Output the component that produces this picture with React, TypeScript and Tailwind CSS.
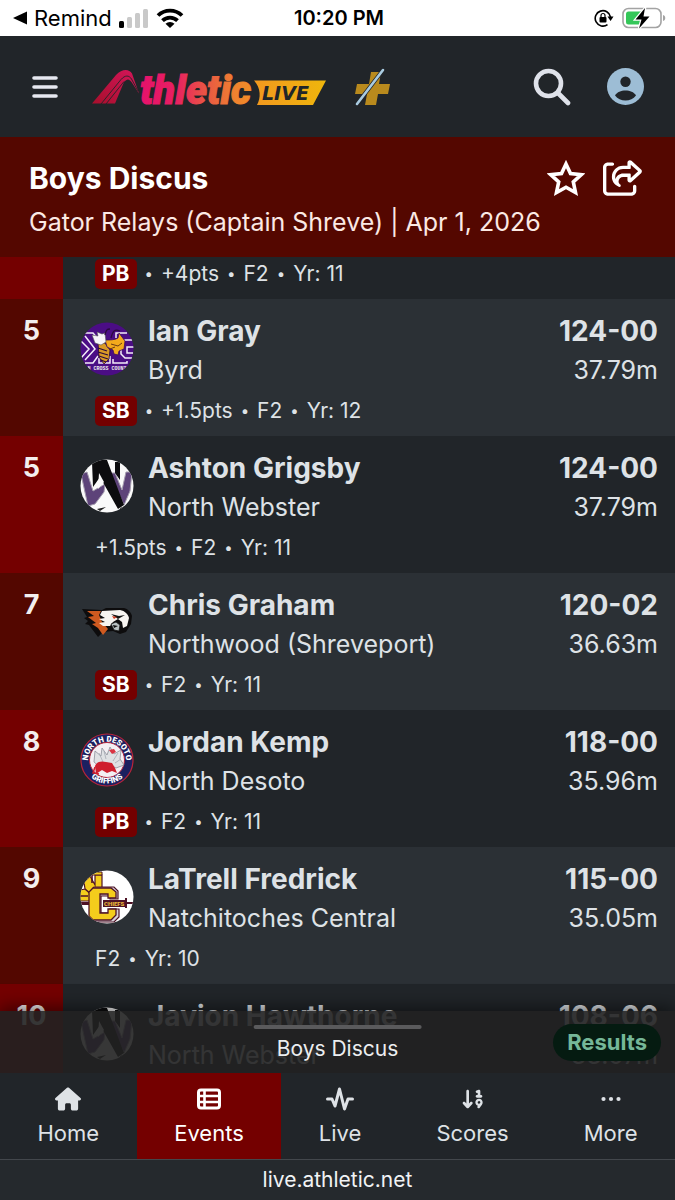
import type { ReactNode } from 'react'
import { FaArrowDown19, FaHouse, FaRegShareFromSquare } from 'react-icons/fa6'

interface Result {
  place: number
  name: string
  school: string
  logo: ReactNode
  mark: string
  metric: string
  badge?: 'PB' | 'SB'
  meta: string[]
}

function ByrdLogo() {
  return (
    <svg viewBox="0 0 54 54" className="size-[54px]" aria-hidden="true">
      <clipPath id="byrd"><circle cx="27" cy="27" r="26.5" /></clipPath>
      <g clipPath="url(#byrd)">
        <rect width="54" height="54" fill="#4b0d85" />
        <g fill="none" stroke="#f2ecf8" strokeWidth="1.5">
          <path d="M4 11h9l5 6M1 19l8 8-8 9M5 41h8l5-7M19 36v5h11v-7M47 11H36v5M53 18h-8l-4 4v10l4 4h9M33 37v4h14v-2M53 31h-6v-6h7" />
          <path d="M5 14l10 13L5 38" />
        </g>
        <path d="M18 20l7 1 5 7-1 9-5 5-5-7z" fill="#d99a26" stroke="#2a0b3c" strokeWidth=".8" />
        <path d="M18 26l9 3M18 30l10 3M19 34l9 3M21 38l5 2" stroke="#2a0b3c" strokeWidth="1.3" />
        <path d="M25 18c5 0 10 0 13-2l1-5 6 8-1 8-5 2-1 4-4-1-1-4-6-3z" fill="#f3aa1c" stroke="#3b0a5f" strokeWidth=".8" />
        <path d="M31 22l7 2 4-3M30 27l5-2" fill="none" stroke="#6b3a12" />
        <path d="M12 13l6 1-1-4 5 2 3-1 1 9-5 3-6-2z" fill="#f7f4fa" stroke="#555" strokeWidth=".6" />
        <path d="M31 16c2-8 4-9 9-7M25 13c1-5 2-6 5-6" fill="none" stroke="#2a0b3c" strokeWidth="1.3" />
        <text x="27" y="48" textAnchor="middle" fontSize="5" fontWeight="700" fill="#eee" fontFamily="Liberation Mono, monospace">N CROSS COUNT</text>
      </g>
    </svg>
  )
}

function WebsterLogo({ id }: { id: string }) {
  return (
    <svg viewBox="0 0 54 54" className="size-[54px]" aria-hidden="true">
      <clipPath id={id}><circle cx="27" cy="27" r="26.5" /></clipPath>
      <g clipPath={`url(#${id})`}>
        <rect width="54" height="54" fill="#fafafa" />
        <path d="M1 15l6-2 6 19 12-7-1 8-9 12-7 2zM29 14h6l7 17 4-18h6l-2 19-6 14z" fill="#5d4379" stroke="#a49cae" />
        <path d="M12 3l8-2h7l17 45-6 4-18-32-7 10zM35 3h5v18l-5-7z" fill="#0c0c0e" />
        <path d="M19 14l5 9-6 7z" fill="#fafafa" />
        <path d="M29 3l4 0 1 10z" fill="#fafafa" />
        <path d="M17 50l9-2-6 4zM40 49l5-2-5 6z" fill="#222" />
      </g>
    </svg>
  )
}

function NorthwoodLogo() {
  return (
    <svg viewBox="0 0 54 54" className="size-[54px]" aria-hidden="true">
      <path d="M2 13l20 1 4-2h18c4 1 7 4 8 8l-1 8-5 8-6 2-7-3-10 1-5 5-9-12-4-1 3-3-4-3 3-1z" fill="#0d0c0d" />
      <path d="M7 15h14l-2 4 3 7 6 7-5 6-5-7-6-4 4-1-8-6 6-1z" fill="#cf5a20" />
      <path d="M22 15l18-1c5 1 8 4 9 8l-2 8-4 2-1-6-4-3-5 3-3 4h-7l-4-3 6-1-6-3 6-1-5-3z" fill="#f7f4f0" />
      <path d="M31 18l8 2 6-1-7 4z" fill="#111" />
      <path d="M32 20l5 1-3 2z" fill="#cf3b20" />
      <path d="M31 28l5-2 4 3-1 6-5-1z" fill="#b9c1c2" stroke="#151515" strokeWidth=".8" />
      <path d="M33 29l5 1-4 2z" fill="#111" />
    </svg>
  )
}

function DesotoLogo() {
  return (
    <svg viewBox="0 0 54 54" className="size-[54px]" aria-hidden="true">
      <circle cx="27" cy="27" r="26" fill="#1c2060" stroke="#b8243a" strokeWidth="1.2" />
      <circle cx="27" cy="27" r="17.500" fill="#f3eff3" stroke="#b8243a" />
      <path id="desoto-top" d="M8.500 32A19 19 0 1 1 45.500 32" fill="none" />
      <path id="desoto-bottom" d="M3 30A24.300 24.300 0 0 0 51 30" fill="none" />
      <g fill="#fff" fontSize="8" fontWeight="900" fontFamily="Roboto, sans-serif" textAnchor="middle">
        <text><textPath href="#desoto-top" startOffset="50%">NORTH DESOTO</textPath></text>
        <text><textPath href="#desoto-bottom" startOffset="50%">GRIFFINS</textPath></text>
      </g>
      <path d="M15 18l6 5 1-8 5 7 3-8 4 7 7-4-1 9 4 6-8 3-9-5-6 5-7-6z" fill="#dfe1e4" stroke="#8b8f9a" strokeWidth=".8" />
      <path d="M19 20l4 9M24 18l2 8M38 20l-5 8M41 26l-6 4" stroke="#a5a9b2" strokeWidth=".8" />
      <path d="M15 33c2-5 7-5 11-4l6 1 3 5 2 5-5-2-5 2-5-3-6 4z" fill="#cf1f2e" />
      <path d="M29 17l5-1 2 3-4 2z" fill="#d93443" />
      <path d="M15 34l-2 6 6 1" fill="none" stroke="#cf1f2e" strokeWidth="1.500" />
    </svg>
  )
}

function ChiefsLogo() {
  return (
    <svg viewBox="0 0 54 54" className="size-[54px]" aria-hidden="true">
      <clipPath id="chiefs"><circle cx="27" cy="27" r="26.5" /></clipPath>
      <g clipPath="url(#chiefs)">
        <rect width="54" height="54" fill="#fff" />
        <path d="M4 12l6-6 5 9V5h7v13l-8 4-4 9H0V20l5-1z" fill="#f4cd1c" stroke="#4e1226" strokeWidth="1.200" />
        <path d="M12 4v9M5 19l7 6M0 26h8" stroke="#4e1226" strokeWidth="1.600" />
        <path d="M12 2h10v3H12z" fill="#f4cd1c" stroke="#4e1226" />
        <path d="M14 17h20l4 4v8h-8v-3h-9v17h9v-4h9v8l-5 5H16l-5-5V21z" fill="#d6d0d8" stroke="#4e1226" strokeWidth="1.200" />
        <path d="M13 18h18l5 4v6h-8v-4h-8v19h8v-4h8v6l-5 5H13l-4-4V22z" fill="#f4cd1c" stroke="#4e1226" strokeWidth="1.300" />
        <path d="M23 30h22v-2l2 0v4h6v2h-6v4h-2v-1H23z" fill="#4e1226" />
        <path d="M0 32h9v3H0z" fill="#4e1226" />
        <text x="24" y="36" fontSize="6" fontWeight="900" fill="#e8b63a" fontFamily="Roboto, sans-serif">CHIEFS</text>
      </g>
    </svg>
  )
}

const results: Result[] = [
  { place: 5, name: 'Ian Gray', school: 'Byrd', logo: <ByrdLogo />, mark: '124-00', metric: '37.79m', badge: 'SB', meta: ['+1.5pts', 'F2', 'Yr: 12'] },
  { place: 5, name: 'Ashton Grigsby', school: 'North Webster', logo: <WebsterLogo id="nw-1" />, mark: '124-00', metric: '37.79m', meta: ['+1.5pts', 'F2', 'Yr: 11'] },
  { place: 7, name: 'Chris Graham', school: 'Northwood (Shreveport)', logo: <NorthwoodLogo />, mark: '120-02', metric: '36.63m', badge: 'SB', meta: ['F2', 'Yr: 11'] },
  { place: 8, name: 'Jordan Kemp', school: 'North Desoto', logo: <DesotoLogo />, mark: '118-00', metric: '35.96m', badge: 'PB', meta: ['F2', 'Yr: 11'] },
  { place: 9, name: 'LaTrell Fredrick', school: 'Natchitoches Central', logo: <ChiefsLogo />, mark: '115-00', metric: '35.05m', meta: ['F2', 'Yr: 10'] },
  { place: 10, name: 'Javion Hawthorne', school: 'North Webster', logo: <WebsterLogo id="nw-2" />, mark: '108-06', metric: '33.07m', meta: ['F2', 'Yr: 11'] },
]

function Meta({ badge, meta }: { badge?: string; meta: string[] }) {
  return (
    <p className="flex h-[30px] items-center gap-2 pl-8 text-[21px]">
      {badge && <span className="rounded-[5px] bg-[#740000] px-[7px] leading-[30px] font-bold text-white">{badge}</span>}
      {meta.map((item, i) => (
        <span key={item} className="flex items-center gap-2">
          {(badge || i > 0) && <span className="text-[15px]">•</span>}
          <span>{item}</span>
        </span>
      ))}
    </p>
  )
}

function ResultRow({ result }: { result: Result }) {
  return (
    <li className="group flex shrink-0 bg-[#212529] odd:bg-[#2b3035]">
      <div className="w-[63px] shrink-0 bg-[#740000] pt-3 text-center text-[27px] leading-10 font-bold text-[#f3eeee] group-odd:bg-[#530700]">
        {result.place}
      </div>
      <div className="min-w-0 flex-1 pt-3 pb-[10px]">
        <div className="flex gap-[14px] px-[17px]">
          <div className="mt-[11px] size-[54px] shrink-0">{result.logo}</div>
          <div className="min-w-0 flex-1">
            <p className="truncate text-[28px] leading-10 font-bold">{result.name}</p>
            <p className="truncate text-[25px] leading-[38px]">{result.school}</p>
          </div>
          <div className="text-right">
            <p className="text-[28px] leading-10 font-bold">{result.mark}</p>
            <p className="text-[25px] leading-[38px]">{result.metric}</p>
          </div>
        </div>
        <div className="mt-[7px]">
          <Meta badge={result.badge} meta={result.meta} />
        </div>
      </div>
    </li>
  )
}

function StatusBar() {
  return (
    <div className="grid h-9 shrink-0 grid-cols-[1fr_auto_1fr] items-center bg-white pr-[9px] pl-3 text-black">
      <div className="flex items-center gap-[7px]">
        <svg viewBox="0 0 15 14" className="h-[14px] w-[15px]" aria-hidden="true"><path d="M1 7L15 .5v13z" /></svg>
        <span className="text-[22px] leading-none">Remind</span>
        <svg viewBox="0 0 30 20" className="h-5 w-[30px]" aria-hidden="true">
          <rect x="0" y="13" width="5" height="7" rx="1.500" />
          <g fill="#c9c9c9">
            <rect x="8" y="9" width="5" height="11" rx="1.500" />
            <rect x="16" y="5" width="5" height="15" rx="1.500" />
            <rect x="24" y="1" width="5" height="19" rx="1.500" />
          </g>
        </svg>
        <svg viewBox="0 0 28 20" className="h-5 w-7" aria-hidden="true">
          <g fill="none" stroke="#000" strokeWidth="3.800">
            <path d="M2 7.500a17 17 0 0 1 24 0" />
            <path d="M6.500 12.600a10.700 10.700 0 0 1 15 0" />
          </g>
          <path d="M14 20l-4.500-4.300a6.500 6.500 0 0 1 9 0z" />
        </svg>
      </div>
      <span className="text-[20px] leading-none font-semibold">10:20 PM</span>
      <div className="flex items-center justify-end gap-2">
        <svg viewBox="0 0 20 18" className="h-[18px] w-5" aria-hidden="true">
          <path d="M13.500 15.600A7.700 7.700 0 1 1 16.500 8" fill="none" stroke="#000" strokeWidth="1.600" />
          <path d="M13.500 7.500h6L16.600 12z" />
          <rect x="5.500" y="8" width="7" height="5.500" rx="1" />
          <path d="M7 8V6.500a2 2 0 0 1 4 0V8" fill="none" stroke="#000" strokeWidth="1.200" />
        </svg>
        <svg viewBox="0 0 44 24" className="h-6 w-11" aria-hidden="true">
          <rect x="1" y="2.500" width="38" height="19" rx="5.500" fill="none" stroke="#a3a3a3" strokeWidth="1.600" />
          <rect x="4" y="5.500" width="17" height="13" rx="2.500" fill="#34c759" />
          <path d="M41 9c3 .5 3 5.500 0 6z" fill="#a3a3a3" />
          <path d="M23 2L13.500 13.500h6L17 22.500 27.500 10.500h-6z" stroke="#fff" strokeWidth="2.500" paintOrder="stroke" />
        </svg>
      </div>
    </div>
  )
}

function BrandLogo() {
  return (
    <svg viewBox="0 0 240 44" className="h-11 w-[240px] overflow-visible" role="img" aria-label="Athletic LIVE">
      <defs>
        <linearGradient id="word" gradientUnits="userSpaceOnUse" x1="50" y1="0" x2="168" y2="0">
          <stop offset="0" stopColor="#e5126b" />
          <stop offset=".3" stopColor="#e81f62" />
          <stop offset=".55" stopColor="#e95445" />
          <stop offset=".8" stopColor="#ef8130" />
          <stop offset="1" stopColor="#f39322" />
        </linearGradient>
        <linearGradient id="peak" x1="0" y1="1" x2="1" y2="0">
          <stop offset="0" stopColor="#a70f2c" />
          <stop offset="1" stopColor="#d5165a" />
        </linearGradient>
        <linearGradient id="tag" x1="0" y1="0" x2="1" y2="0">
          <stop offset="0" stopColor="#f2981f" />
          <stop offset="1" stopColor="#efb60c" />
        </linearGradient>
      </defs>
      <path d="M2 38.500L26 10C32 3.500 39 3.500 42 8.500L49 28.500 41.500 17c-2.500-3.500-4.500-3.500-7.500 0L25 38.500H17L4 38.500z" fill="url(#peak)" />
      <path d="M11 39L31 14.500c4-4.500 8-4.500 10.500-.5L48 26M16 39L34 16.500" fill="none" stroke="#212529" strokeWidth=".9" />
      <path d="M164 15.500h72L223 40h-56c4-7 4-17-3-24.500z" fill="url(#tag)" />
      <text x="50" y="38.500" fontSize="40" fontStyle="italic" fontWeight="900" fill="url(#word)" stroke="url(#word)" fontFamily="Roboto, sans-serif">thletic</text>
      <text x="172" y="35" fontSize="19" fontStyle="italic" fontWeight="700" fill="#212529" fontFamily="DejaVu Sans, sans-serif">LIVE</text>
    </svg>
  )
}

function TopNav() {
  return (
    <header className="flex h-[101px] shrink-0 items-center bg-[#212529] pr-[31px] pl-8">
      <button aria-label="Menu">
        <svg viewBox="0 0 26 24" className="h-6 w-[26px]" stroke="#e6e8f0" strokeWidth="3.600" strokeLinecap="round" aria-hidden="true">
          <path d="M2 3h22M2 12h22M2 21h22" />
        </svg>
      </button>
      <a href="#" className="ml-8"><BrandLogo /></a>
      <button aria-label="Athletic plus" className="ml-6">
        <svg viewBox="0 0 37 38" className="h-[38px] w-[37px]" aria-hidden="true">
          <path d="M17 4h10l-2 12h11l-2 10H24l-2 11H11l2-11H1l2-10h12z" fill="#b98a1d" />
          <path d="M3 36L29 2" stroke="#212529" strokeWidth="4" />
          <path d="M3 36L29 2" stroke="#a9cbe0" strokeWidth="2.600" strokeLinecap="round" />
        </svg>
      </button>
      <button aria-label="Search" className="ml-auto">
        <svg viewBox="0 0 38 38" className="size-[38px]" fill="none" stroke="#dfe2ea" strokeLinecap="round" aria-hidden="true">
          <circle cx="15.500" cy="15.500" r="12.500" strokeWidth="4.600" />
          <path d="M25 25l10 10" strokeWidth="4.600" />
        </svg>
      </button>
      <button aria-label="Account" className="ml-9">
        <svg viewBox="0 0 37 37" className="size-[37px]" aria-hidden="true">
          <circle cx="18.500" cy="18.500" r="18.500" fill="#9dbdd5" />
          <circle cx="18.500" cy="13.800" r="5.200" fill="#212529" />
          <path d="M8 27.500c2.200-3.600 6-5 10.500-5s8.300 1.400 10.500 5c-2.600 3.300-6.200 5-10.500 5S10.600 30.800 8 27.500z" fill="#212529" />
        </svg>
      </button>
    </header>
  )
}

function EventHeader() {
  return (
    <section className="h-[120px] shrink-0 bg-[#540700] pt-5 pr-8 pl-[29px] text-white">
      <div className="flex items-center">
        <h1 className="text-[30px] leading-[42px] font-bold">Boys Discus</h1>
        <button aria-label="Favorite" className="ml-auto">
          <svg viewBox="0 0 38 38" className="size-[38px]" fill="none" stroke="#fff" strokeWidth="3.600" aria-hidden="true">
            <path d="M19 5l4.500 9.500 10.800 1.200-8 7.200 2.200 10.600-9.500-5.300-9.500 5.300 2.200-10.600-8-7.200 10.800-1.200z" />
          </svg>
        </button>
        <button aria-label="Share" className="ml-[18px]"><FaRegShareFromSquare className="size-10" /></button>
      </div>
      <p className="truncate text-[25px] leading-[46px] text-[#fbe9e4]">Gator Relays (Captain Shreve) | Apr 1, 2026</p>
    </section>
  )
}

const tabs = [
  { label: 'Home', icon: <FaHouse className="size-[26px]" /> },
  {
    label: 'Events',
    icon: (
      <svg viewBox="0 0 24 22" className="h-[22px] w-6" aria-hidden="true">
        <rect x="1.500" y="2" width="21" height="18" rx="2.500" fill="none" stroke="currentColor" strokeWidth="3" />
        <path d="M2 8h20M2 14h20M7.500 2v18" stroke="currentColor" strokeWidth="2.600" />
      </svg>
    ),
  },
  {
    label: 'Live',
    icon: (
      <svg viewBox="0 0 28 26" className="h-[26px] w-7" fill="none" stroke="currentColor" strokeWidth="3" strokeLinecap="round" strokeLinejoin="round" aria-hidden="true">
        <path d="M1.500 13h4.500l3 7L13.500 3l5 20 3.500-10h4.500" />
      </svg>
    ),
  },
  { label: 'Scores', icon: <FaArrowDown19 className="size-6" /> },
  {
    label: 'More',
    icon: (
      <svg viewBox="0 0 20 6" className="h-[6px] w-5" fill="currentColor" aria-hidden="true">
        <circle cx="2.500" cy="3" r="2.100" /><circle cx="10" cy="3" r="2.100" /><circle cx="17.500" cy="3" r="2.100" />
      </svg>
    ),
  },
]

function TabBar() {
  return (
    <nav className="flex h-[87px] shrink-0 border-b border-[#43474c] bg-[#212529] text-[22px]">
      {tabs.map(tab => (
        <a
          key={tab.label}
          href="#"
          aria-current={tab.label === 'Events' ? 'page' : undefined}
          className="flex flex-auto flex-col items-center gap-1 pt-3 aria-[current=page]:bg-[#740000] aria-[current=page]:text-white"
        >
          <span className="flex h-7 items-center">{tab.icon}</span>
          <span className="leading-8">{tab.label}</span>
        </a>
      ))}
    </nav>
  )
}

export default function App() {
  return (
    <div className="flex h-screen flex-col overflow-hidden bg-[#212529] font-['Inter',sans-serif] text-[#dee2e6]">
      <StatusBar />
      <TopNav />
      <EventHeader />
      <main className="relative flex min-h-0 flex-1 flex-col overflow-hidden">
        {/* Tail of the row scrolled under the header */}
        <div className="flex h-[42px] shrink-0">
          <div className="w-[63px] bg-[#740000]" />
          <div className="pt-[2px]"><Meta badge="PB" meta={['+4pts', 'F2', 'Yr: 11']} /></div>
        </div>
        <ol className="flex flex-col">
          {results.map(result => <ResultRow key={result.place + result.name} result={result} />)}
        </ol>
        {/* Current event drawer */}
        <div className="absolute inset-x-0 bottom-0 grid h-[62px] grid-cols-[1fr_auto_1fr] items-center bg-[#212121]/90 px-[14px] shadow-[0_-4px_16px_rgba(0,0,0,0.5)]">
          <div className="absolute top-[14px] left-1/2 h-1 w-1/4 -translate-x-1/2 rounded-full bg-[#5a5a5c]" />
          <span />
          <span className="pt-[14px] text-[21px] text-[#eceef0]">Boys Discus</span>
          <span className="justify-self-end rounded-full bg-[#051b11] px-[14px] text-[22px] leading-[37px] font-bold text-[#75b798]">Results</span>
        </div>
      </main>
      <TabBar />
      <footer className="flex h-10 shrink-0 items-center justify-center bg-[#25292d] text-[21px] text-[#f1f3f5]">live.athletic.net</footer>
    </div>
  )
}
